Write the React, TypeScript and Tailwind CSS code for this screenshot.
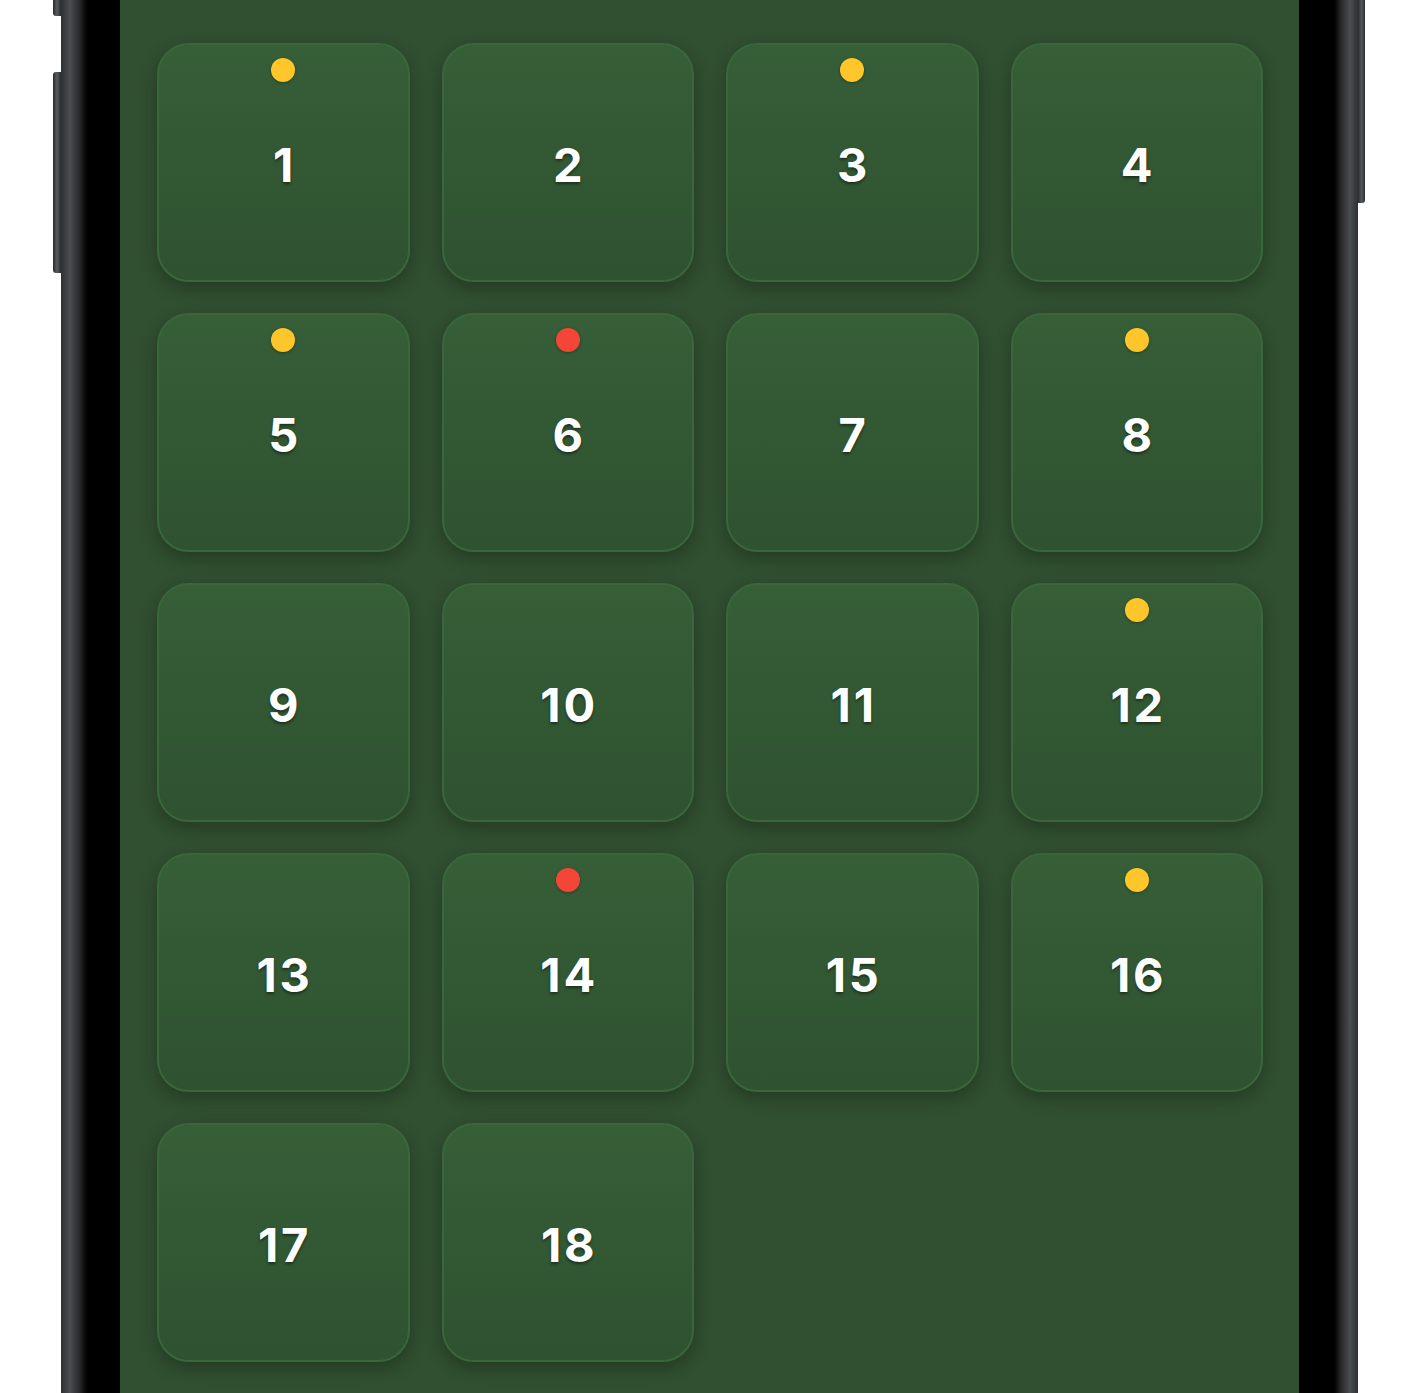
import React from 'react';

// 0 = none, 1 = yellow, 2 = red
const DAYS: { n: number; dot: 0 | 1 | 2 }[] = [
  { n: 1, dot: 1 },
  { n: 2, dot: 0 },
  { n: 3, dot: 1 },
  { n: 4, dot: 0 },
  { n: 5, dot: 1 },
  { n: 6, dot: 2 },
  { n: 7, dot: 0 },
  { n: 8, dot: 1 },
  { n: 9, dot: 0 },
  { n: 10, dot: 0 },
  { n: 11, dot: 0 },
  { n: 12, dot: 1 },
  { n: 13, dot: 0 },
  { n: 14, dot: 2 },
  { n: 15, dot: 0 },
  { n: 16, dot: 1 },
  { n: 17, dot: 0 },
  { n: 18, dot: 0 },
];

function Tile({ n, dot }: { n: number; dot: 0 | 1 | 2 }) {
  return (
    <div className="relative h-[239px] rounded-[32px] border-2 border-[#3a663b] bg-gradient-to-b from-[#365e37] to-[#2f5230] shadow-[0_6px_16px_rgba(20,35,20,0.45)] flex items-center justify-center">
      {dot !== 0 && (
        <span
          className={`absolute top-[13px] left-1/2 -translate-x-1/2 w-6 h-6 rounded-full shadow-[0_1px_3px_rgba(0,0,0,0.3)] ${
            dot === 1 ? 'bg-[#fec62b]' : 'bg-[#f44637]'
          }`}
        />
      )}
      <span className="mt-[3px] pl-[0.06em] text-[47px] font-bold text-white tracking-[0.06em] leading-none [text-shadow:0_2px_3px_rgba(0,0,0,0.45)] [font-family:Inter,'Liberation_Sans',sans-serif]">
        {n}
      </span>
    </div>
  );
}

export default function App() {
  return (
    <div className="h-[1393px] w-[1419px] overflow-hidden bg-white flex">
      {/* left side buttons */}
      <div className="w-[61px] shrink-0 flex flex-col items-end">
        <div className="w-[8px] h-[16px] rounded-bl-[3px] bg-gradient-to-r from-[#2b2d2f] via-[#5a5d60] to-[#2a2c2e]" />
        <div className="mt-[56px] w-[8px] h-[201px] rounded-l-[3px] bg-gradient-to-r from-[#2b2d2f] via-[#5a5d60] to-[#2a2c2e]" />
      </div>
      {/* left metal rim */}
      <div className="w-[18px] shrink-0 bg-gradient-to-r from-[#2e3032] via-[#4b4f52] to-[#2a2c2e]" />
      {/* left bezel */}
      <div className="w-[41px] shrink-0 bg-gradient-to-r from-[#2c2c2c] via-black via-30% to-black" />
      {/* screen */}
      <div className="w-[1179px] shrink-0 bg-[#314f31] pl-[37px] pr-[36px] pt-[43px]">
        <div className="grid grid-cols-4 gap-x-[32px] gap-y-[31px]">
          {DAYS.map((d) => (
            <Tile key={d.n} n={d.n} dot={d.dot} />
          ))}
        </div>
      </div>
      {/* right bezel */}
      <div className="w-[43px] shrink-0 bg-gradient-to-r from-black via-black via-75% to-[#303030]" />
      {/* right metal rim */}
      <div className="w-[16px] shrink-0 bg-gradient-to-r from-[#2a2c2e] via-[#4b4f52] to-[#2e3032]" />
      {/* right button */}
      <div className="w-[7px] shrink-0">
        <div className="h-[203px] rounded-br-[3px] bg-gradient-to-r from-[#2a2c2e] via-[#55585b] to-[#2b2d2f]" />
      </div>
    </div>
  );
}
